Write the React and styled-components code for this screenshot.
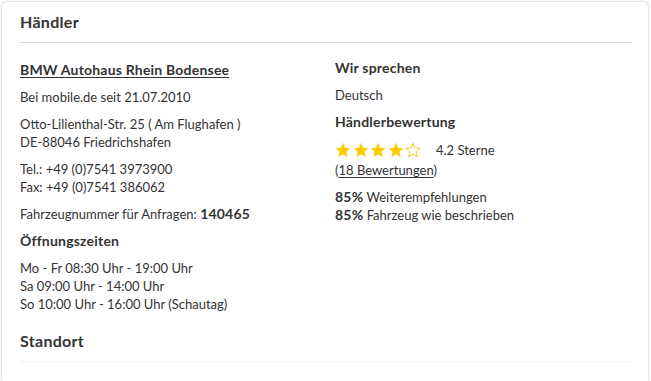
import React from 'react';
import styled, { createGlobalStyle } from 'styled-components';

const GlobalStyle = createGlobalStyle`
  body {
    margin: 0;
    background: #ffffff;
    font-family: Lato, "Noto Sans", sans-serif;
    color: #333;
  }
`;

const Card = styled.section`
  margin: 2px 3px 0 2px;
  padding: 10px 16px 20px 18px;
  background: #fff;
  border-radius: 5px 5px 0 0;
  box-shadow: 0 0 3px rgba(0, 0, 0, 0.28);
  min-height: 370px;
  box-sizing: border-box;
`;

const Title = styled.h2`
  margin: 0;
  font-size: 16px;
  line-height: 20px;
  font-weight: 700;
  letter-spacing: 0.3px;
  padding-bottom: 10px;
  border-bottom: 1px solid ${p => (p.$last ? '#f0f0f0' : '#d9d9d9')};
`;

const Columns = styled.div`
  display: grid;
  grid-template-columns: 315px 1fr;
  margin-top: 16px;
`;

const Column = styled.div`
  display: flex;
  flex-direction: column;
  gap: 9px;
`;

const Text = styled.p`
  margin: 0;
  font-size: 13px;
  line-height: 18px;

  b {
    font-size: 14px;
    letter-spacing: 0.2px;
  }
`;

const Heading = styled.h3`
  margin: 0;
  font-size: 14px;
  line-height: 18px;
  font-weight: 700;
  letter-spacing: 0.2px;
`;

const DealerLink = styled.a`
  font-size: 14px;
  line-height: 18px;
  font-weight: 700;
  letter-spacing: 0.2px;
  color: #333;
  text-decoration: underline;
  text-underline-offset: 2px;
`;

const Rating = styled.div`
  display: flex;
  flex-direction: column;
  gap: 1px;
`;

const StarRow = styled.div`
  display: flex;
  align-items: center;
  height: 20px;
`;

const Stars = styled.div`
  display: flex;
  gap: 1.5px;
  margin-right: 15px;
`;

const ReviewLink = styled.a`
  color: #333;
  text-decoration: underline;
  text-underline-offset: 2px;
`;

const Standort = styled(Title)`
  margin-top: 18px;
`;

const Star = ({ filled }) => (
  <svg width="16" height="16" viewBox="0 0 24 23">
    <path
      d="M12 1.5l3.1 6.9 7.4.7-5.6 5 1.7 7.4L12 17.6l-6.6 3.9 1.7-7.4-5.6-5 7.4-.7z"
      fill={filled ? '#fdc800' : 'none'}
      stroke={filled ? '#fdc800' : '#f3c300'}
      strokeWidth={filled ? 0.5 : 1.3}
      strokeLinejoin="round"
    />
  </svg>
);

export default function App() {
  return (
    <>
      <GlobalStyle />
      <Card>
        <Title>Händler</Title>
        <Columns>
          <Column>
            <div><DealerLink href="#">BMW Autohaus Rhein Bodensee</DealerLink></div>
            <Text>Bei mobile.de seit 21.07.2010</Text>
            <Text>
              Otto-Lilienthal-Str. 25 ( Am Flughafen )<br />
              DE-88046 Friedrichshafen
            </Text>
            <Text>
              Tel.: +49 (0)7541 3973900<br />
              Fax: +49 (0)7541 386062
            </Text>
            <Text>Fahrzeugnummer für Anfragen: <b>140465</b></Text>
            <Heading>Öffnungszeiten</Heading>
            <Text>
              Mo - Fr 08:30 Uhr - 19:00 Uhr<br />
              Sa 09:00 Uhr - 14:00 Uhr<br />
              So 10:00 Uhr - 16:00 Uhr (Schautag)
            </Text>
          </Column>
          <Column>
            <Heading>Wir sprechen</Heading>
            <Text>Deutsch</Text>
            <Heading>Händlerbewertung</Heading>
            <Rating>
              <StarRow>
                <Stars>
                  {[1, 2, 3, 4, 5].map(i => <Star key={i} filled={i <= 4} />)}
                </Stars>
                <Text>4.2 Sterne</Text>
              </StarRow>
              <Text>(<ReviewLink href="#">18 Bewertungen</ReviewLink>)</Text>
            </Rating>
            <Text>
              <b>85%</b> Weiterempfehlungen<br />
              <b>85%</b> Fahrzeug wie beschrieben
            </Text>
          </Column>
        </Columns>
        <Standort $last>Standort</Standort>
      </Card>
    </>
  );
}
